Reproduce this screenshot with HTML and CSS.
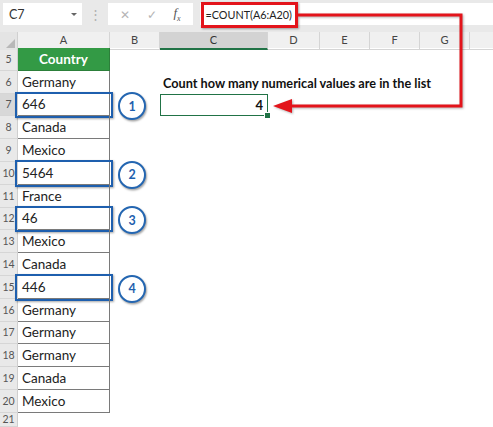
FILE: index.html
```html
<!DOCTYPE html>
<html>
<head>
<meta charset="utf-8">
<link rel="stylesheet" href="styles.css">
</head>
<body>
<div class="bar">
  <div class="namebox"><span>C7</span><span class="caret"></span></div>
  <div class="dots">⋮</div>
  <div class="fxbox"><span class="x">✕</span><span class="ok">✓</span><span class="fx">f<sub>x</sub></span></div>
  <div class="formula"><span class="ftext">=COUNT(A6:A20)</span></div>
</div>
<div class="sheet">
  <div class="row head">
    <div class="corner"><span class="tri"></span></div>
    <div class="ch">A</div><div class="ch">B</div><div class="ch sel">C</div><div class="ch">D</div><div class="ch">E</div><div class="ch">F</div><div class="ch">G</div><div class="ch last"></div>
  </div>
  <div class="row"><div class="rn">5</div><div class="a hdr">Country</div></div>
  <div class="row"><div class="rn">6</div><div class="a">Germany</div><div></div><div class="label">Count how many numerical values are in the list</div></div>
  <div class="row"><div class="rn rsel">7</div><div class="a mark" data-n="1">646</div><div></div><div class="c7">4</div></div>
  <div class="row"><div class="rn">8</div><div class="a">Canada</div></div>
  <div class="row"><div class="rn">9</div><div class="a">Mexico</div></div>
  <div class="row"><div class="rn">10</div><div class="a mark" data-n="2">5464</div></div>
  <div class="row"><div class="rn">11</div><div class="a">France</div></div>
  <div class="row"><div class="rn">12</div><div class="a mark" data-n="3">46</div></div>
  <div class="row"><div class="rn">13</div><div class="a">Mexico</div></div>
  <div class="row"><div class="rn">14</div><div class="a">Canada</div></div>
  <div class="row"><div class="rn">15</div><div class="a mark" data-n="4">446</div></div>
  <div class="row"><div class="rn">16</div><div class="a">Germany</div></div>
  <div class="row"><div class="rn">17</div><div class="a">Germany</div></div>
  <div class="row"><div class="rn">18</div><div class="a">Germany</div></div>
  <div class="row"><div class="rn">19</div><div class="a">Canada</div></div>
  <div class="row"><div class="rn">20</div><div class="a">Mexico</div></div>
  <div class="row short"><div class="rn">21</div></div>
  <div class="row short"><div class="rn"></div></div>
</div>
<div class="redbox"></div>
<svg class="connector" width="493" height="427" viewBox="0 0 493 427">
  <path d="M298 15 H461 V106 H288" fill="none" stroke="#e3141b" stroke-width="3"/>
  <polygon points="273,106 292,99 292,113" fill="#e3141b"/>
</svg>
</body>
</html>
```
FILE: styles.css
```css
* { box-sizing: border-box; }
html, body { margin: 0; padding: 0; background: #fff; }
body {
  width: 493px; height: 427px; overflow: hidden; position: relative;
  font-family: Lato, "Liberation Sans", sans-serif; color: #222;
}
.bar {
  height: 32px; background: #e9e9e9;
  display: flex; align-items: flex-start; padding-top: 3px;
}
.namebox {
  margin-left: 3px; width: 79px; height: 22px; background: #fff;
  display: flex; align-items: center; justify-content: space-between;
  padding: 0 5px 0 6px; font-size: 12.5px; color: #333;
}
.caret {
  width: 0; height: 0; border-left: 3px solid transparent; border-right: 3px solid transparent;
  border-top: 3px solid #666;
}
.dots { width: 26px; text-align: center; color: #b0b0b0; font-size: 13px; line-height: 22px; }
.fxbox {
  width: 85px; height: 22px; background: #fff;
  display: flex; align-items: center; justify-content: space-around; padding: 0 4px;
  font-size: 12px; color: #b5b5b5;
}
.fxbox .fx { color: #555; font-family: "Liberation Serif", serif; font-style: italic; font-size: 13px; }
.fxbox .fx sub { font-size: 8px; }
.formula {
  margin-left: 7px; flex: 1; height: 22px; background: #fff;
  display: flex; align-items: center; padding-left: 5.5px;
  font-size: 10.8px; color: #222;
}
.redbox {
  position: absolute; left: 201px; top: 2px; width: 97px; height: 26px;
  border: 3px solid #e3141b; box-shadow: 1px 1px 2px rgba(0,0,0,.35);
}
.connector { position: absolute; left: 0; top: 0; filter: drop-shadow(1.5px 1.5px 1px rgba(0,0,0,.3)); }

.sheet { display: flex; flex-direction: column; }
.row {
  display: grid;
  grid-template-columns: 18px 92px 50px 108px 52px 50px 50px 50px 1fr;
  height: 22.8px;
}
.row.head { height: 16px; background: #f0f0f0; }
.row.short { height: 14px; }
.corner { background: #e4e4e4; position: relative; border-right: 1px solid #d0d0d0; }
.tri {
  position: absolute; right: 2px; bottom: 2px; width: 0; height: 0;
  border-left: 9px solid transparent; border-bottom: 9px solid #b8b8b8;
}
.ch {
  font-size: 11px; color: #444; text-align: center; line-height: 16px;
  border-right: 1px solid #d5d5d5; border-bottom: 1px solid #d5d5d5;
}
.ch.sel { background: #d3d3d3; color: #333; border-bottom: 2px solid #217346; }
.ch.last { border-right: none; }
.rn {
  background: #e9e9e9; color: #555; font-size: 10.5px;
  display: flex; align-items: center; justify-content: center;
  border-bottom: 1px solid #d6d6d6; border-right: 1px solid #cfcfcf;
}
.rn.rsel { background: #d8d8d8; }
.short .rn { align-items: flex-start; padding-top: 0; }
.a {
  position: relative; font-size: 13.5px; color: #222;
  display: flex; align-items: center; padding-left: 4px;
  border-right: 1px solid #7a7a7a; border-bottom: 1px solid #7a7a7a;
}
.a.hdr {
  background: #339a45; color: #fff; font-weight: bold; justify-content: center;
  padding-left: 0; border-color: #2c7f3a;
}
.mark::before {
  content: ""; position: absolute; left: -3px; top: -2px; right: -4px; bottom: -3px;
  border: 2.5px solid #1e5fae; box-shadow: 1px 1px 2px rgba(0,0,0,.35);
}
.mark::after {
  content: attr(data-n); position: absolute; left: calc(100% + 9px); top: 50%;
  width: 24px; height: 24px; margin-top: -12px; border-radius: 50%;
  border: 2px solid #2466b1; background: #fff; color: #1e5fae;
  font-size: 12.5px; font-weight: bold; display: flex; align-items: center; justify-content: center;
  box-shadow: 1px 1.5px 2px rgba(0,0,0,.35);
}
.label {
  font-size: 12.7px; font-weight: bold; white-space: nowrap; color: #111;
  display: flex; align-items: flex-end; padding-left: 3px; padding-bottom: 3px;
}
.c7 {
  position: relative; border: 1.5px solid #217346; font-size: 13px; font-weight: bold;
  display: flex; align-items: center; justify-content: flex-end; padding-right: 4px;
  color: #111;
}
.c7::after {
  content: ""; position: absolute; right: -4px; bottom: -4px; width: 5px; height: 5px;
  background: #217346; border: 1px solid #fff;
}
```
